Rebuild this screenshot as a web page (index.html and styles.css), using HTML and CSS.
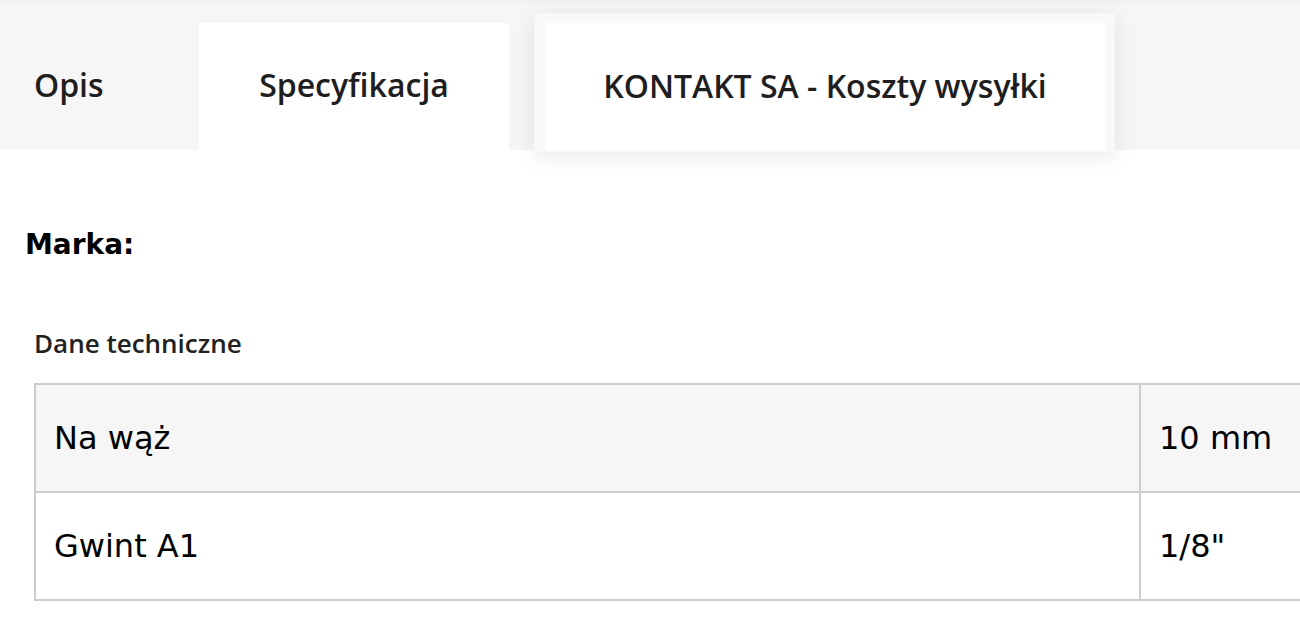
FILE: index.html
```html
<!DOCTYPE html>
<html lang="pl">
<head>
<meta charset="utf-8">
<title>Specyfikacja</title>
<link rel="stylesheet" href="styles.css">
</head>
<body>
<div class="page">
  <div class="tabs">
    <div class="tab tab-opis">Opis</div>
    <div class="tab tab-active">Specyfikacja</div>
    <div class="tab tab-raised"><span class="tab-inner">KONTAKT SA - Koszty wysyłki</span></div>
  </div>
  <div class="content">
    <h3 class="brand">Marka:</h3>
    <div class="group-title">Dane techniczne</div>
    <table class="spec">
      <tr class="odd"><td class="name">Na wąż</td><td class="val">10 mm</td></tr>
      <tr><td class="name">Gwint A1</td><td class="val">1/8"</td></tr>
    </table>
  </div>
</div>
</body>
</html>
```

FILE: styles.css
```css
html, body {
  margin: 0;
  padding: 0;
  background: #fff;
  overflow: hidden;
}
.page {
  width: 1300px;
  height: 636px;
  overflow: hidden;
  font-family: "Open Sans", "Noto Sans", sans-serif;
  color: #1e1e1e;
}
.tabs {
  height: 150px;
  background: linear-gradient(#efefef 0, #f6f6f6 6px, #f6f6f6 100%);
  display: flex;
  align-items: flex-end;
}
.tab {
  height: 127px;
  padding-bottom: 4px;
  display: flex;
  align-items: center;
  font-size: 32px;
  font-weight: 600;
  box-sizing: border-box;
}
.tab-opis {
  width: 199px;
  padding-left: 34px;
}
.tab-active {
  width: 310px;
  background: #fff;
  justify-content: center;
}
.tab-raised {
  margin-left: 25px;
  width: 581px;
  height: 139px;
  margin-bottom: -2px;
  border: 10px solid #f8f8f8;
  border-left-width: 11px;
  border-bottom-width: 2px;
  padding-bottom: 2px;
  background: #fff;
  box-shadow: 0 4px 22px rgba(0, 0, 0, 0.09);
  justify-content: center;
  position: relative;
}
.content {
  padding: 0 0 0 25px;
}
.brand {
  margin: 0;
  padding-top: 78px;
  font-family: "DejaVu Sans", Verdana, sans-serif;
  font-weight: bold;
  font-size: 28px;
  line-height: 34px;
  color: #000;
}
.group-title {
  margin-top: 64px;
  padding-left: 9px;
  font-size: 26px;
  font-weight: 600;
  line-height: 34px;
  color: #222;
}
.spec {
  margin-top: 23px;
  margin-left: 9px;
  width: 1400px;
  border-collapse: collapse;
  font-family: "DejaVu Sans", Verdana, sans-serif;
  font-size: 32px;
  color: #000;
}
.spec td {
  border: 2px solid #cdcdcd;
  height: 108px;
  padding: 0 18px;
  box-sizing: border-box;
  vertical-align: middle;
}
.spec tr.odd td {
  background: #f6f6f6;
}
.spec td.name {
  width: 1105px;
}
```
